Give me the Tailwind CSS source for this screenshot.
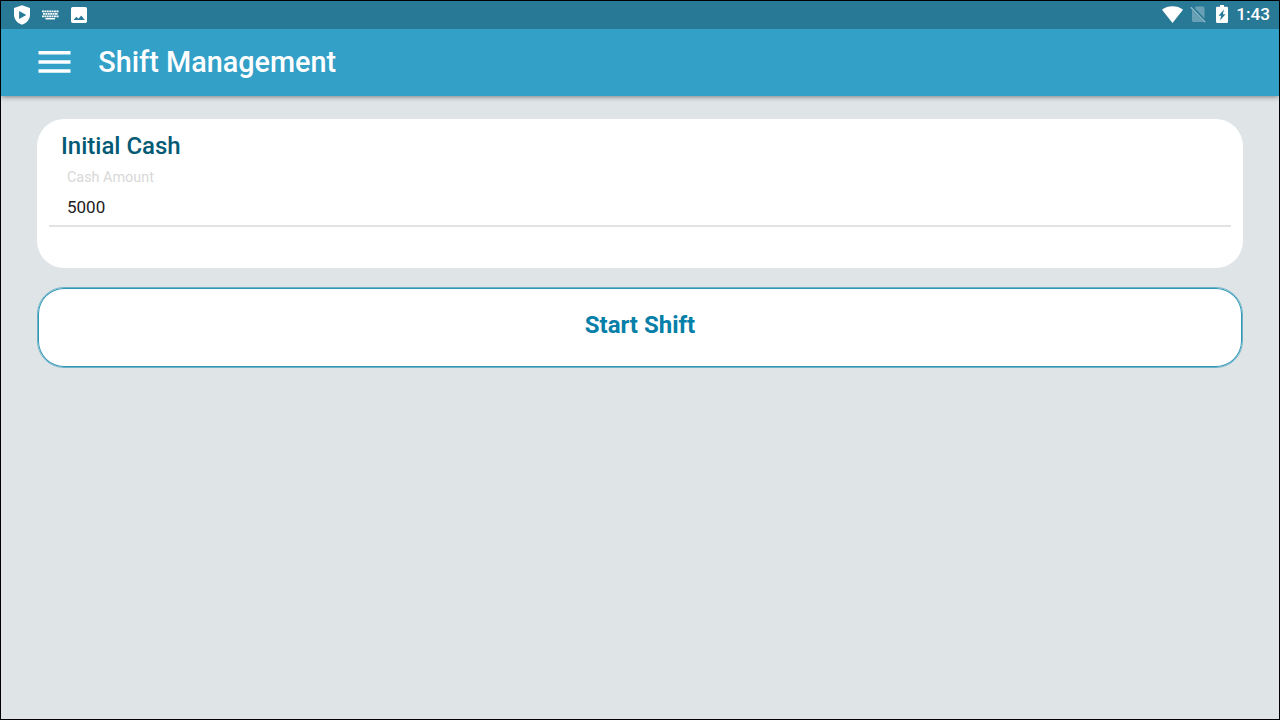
<!DOCTYPE html>
<html lang="en">
<head>
<meta charset="utf-8">
<title>Shift Management</title>
<script src="https://cdn.jsdelivr.net/npm/@tailwindcss/browser@4"></script>
</head>
<body class="flex h-screen flex-col overflow-hidden border border-black bg-[#dfe4e7] font-['Roboto',sans-serif]">
  <div class="z-20 flex h-7 shrink-0 items-center justify-between bg-[#287995] pr-[9px] pl-[11.500px] text-white">
    <div class="flex items-center pb-[1px]">
      <svg class="h-5 w-[18px]" viewBox="0 0 18 20" fill="currentColor"><path fill-rule="evenodd" d="M9 .3 17 3v6.500C17 14.300 13.600 18.300 9 19.800 4.400 18.300 1 14.300 1 9.500V3ZM6.100 6v8l7.200-4Z"/></svg>
      <svg class="ml-[11.500px] h-[10px] w-[17px]" viewBox="0 0 17 10" fill="none" stroke="currentColor"><path stroke-width="1.700" stroke-dasharray="1.900 .5" d="M0 1.400h17M1 3.900h15M0 6.400h17"/><path stroke-width="1.500" d="M3.500 8.700h9.500"/></svg>
      <svg class="ml-[12.300px] h-4 w-4" viewBox="0 0 16 16" fill="currentColor"><path fill-rule="evenodd" d="M1.700 0h12.600Q16 0 16 1.700v12.600Q16 16 14.300 16H1.700Q0 16 0 14.300V1.700Q0 0 1.700 0ZM2.500 13h11.300L10.300 8.400l-2.900 3.400-2-2Z"/></svg>
    </div>
    <div class="flex items-center">
      <svg class="mb-[2px] h-[17px] w-[21px]" viewBox="0 0 21 17" fill="currentColor"><path d="M10.500 17 0 3.700Q4.500 .3 10.500 .3T21 3.700Z"/></svg>
      <svg class="mb-[1px] ml-[7px] h-[17px] w-4" viewBox="0 0 16 17"><path fill="#fff" fill-opacity=".3" d="M6 .5h7.200Q14.500 .5 14.500 2V13.300L4.200 2.500ZM2 4 13.500 16H3.500Q2 16 2 14.500Z"/><path stroke="#287995" stroke-width="1.500" d="m3.500 1.700 11.500 12.200"/><path stroke="#fff" stroke-opacity=".5" stroke-width="1.300" d="m.8 1.300 14.300 15"/></svg>
      <svg class="mb-[2px] ml-[10px] h-[18px] w-3" viewBox="0 0 12 18" fill="currentColor"><path fill-rule="evenodd" d="M4 0h4v1.800h2.800q1.200 0 1.200 1.200v13.800Q12 18 10.800 18H1.200Q0 18 0 16.800V3q0-1.200 1.200-1.200H4ZM8 4.500 2.500 10.700h2.700L4 15.500l5.500-6.300H6.900Z"/></svg>
      <span class="ml-[8px] text-[17.200px] leading-none font-medium">1:43</span>
    </div>
  </div>
  <header class="z-10 flex h-[67px] shrink-0 items-center bg-[#33a0c8] pl-[37px] text-white shadow-[0_1px_5px_rgba(0,0,0,0.45)]">
    <svg class="mb-[2px] h-[22px] w-[33px]" viewBox="0 0 33 22" fill="currentColor"><path d="M.5 0h32v3.500H.5zM.5 9.200h32v3.500H.5zM.5 18.300h32v3.500H.5z"/></svg>
    <h1 class="ml-[27.300px] text-[28.800px] leading-none font-medium">Shift Management</h1>
  </header>
  <main class="flex flex-1 flex-col gap-[19px] px-9 pt-[23px]">
    <section class="h-[149px] rounded-[27px] bg-white px-3 pt-[13px]">
      <h2 class="pl-3 text-[24px] leading-7 font-medium text-[#035a74]">Initial Cash</h2>
      <label class="mt-2 block pl-[18px] text-[14.400px] leading-5 text-[#d8d8d8]">Cash Amount</label>
      <div class="mt-2 h-[31px] border-b-2 border-[#e3e3e3] pl-[18px] text-[17px] leading-[22px] text-[#202020]">5000</div>
    </section>
    <button class="h-[81px] rounded-[27px] border border-[#6fb2c6] bg-white pb-[5px] text-[24px] font-bold text-[#0680a8] shadow-[inset_0_0_0_1px_#2e97b6]">Start Shift</button>
  </main>
</body>
</html>
